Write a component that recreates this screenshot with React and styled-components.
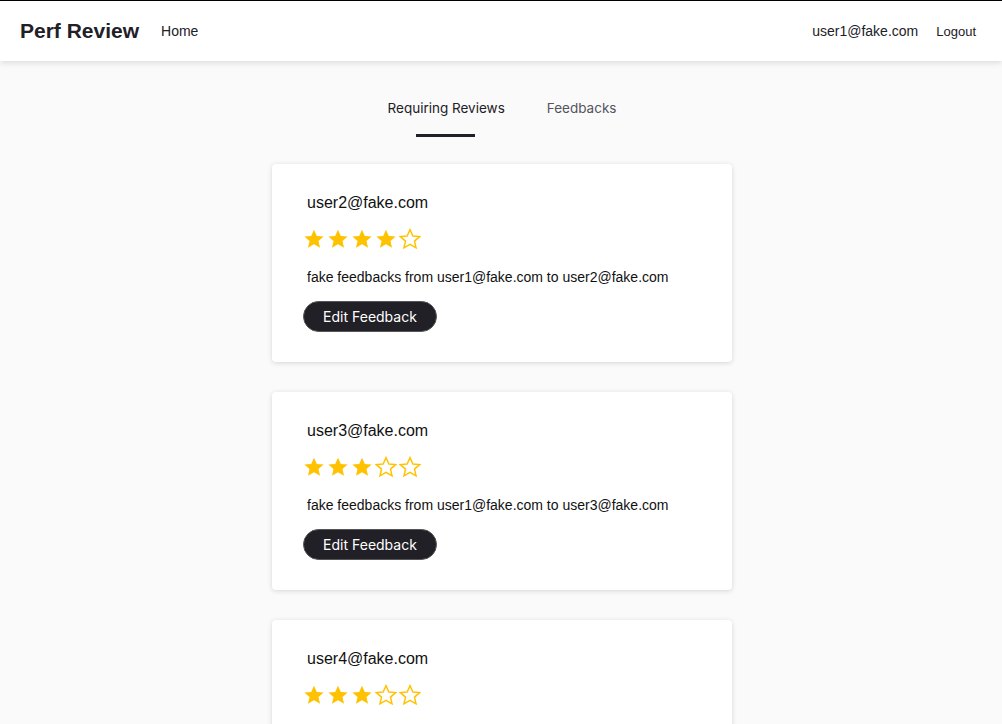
import React from 'react';
import styled, { createGlobalStyle } from 'styled-components';

const reviews = [
    { email: 'user2@fake.com', rating: 4 },
    { email: 'user3@fake.com', rating: 3 },
    { email: 'user4@fake.com', rating: 3 },
];

export default function App() {
    return (
        <Page>
            <GlobalStyle />
            <Header>
                <Left>
                    <Logo>Perf Review</Logo>
                    <NavLink>Home</NavLink>
                </Left>
                <Right>
                    <UserEmail>user1@fake.com</UserEmail>
                    <Logout>Logout</Logout>
                </Right>
            </Header>

            <Tabs>
                <Tab active>Requiring Reviews</Tab>
                <Tab>Feedbacks</Tab>
            </Tabs>

            <List>
                {reviews.map((r) => (
                    <Card key={r.email}>
                        <Email>{r.email}</Email>
                        <Stars>
                            {[0, 1, 2, 3, 4].map((i) => (
                                <Star key={i} filled={i < r.rating} />
                            ))}
                        </Stars>
                        <Text>fake feedbacks from user1@fake.com to {r.email}</Text>
                        <Button>Edit Feedback</Button>
                    </Card>
                ))}
            </List>
        </Page>
    );
}

function Star({ filled }) {
    return (
        <StarSvg viewBox="0 0 24 24">
            <path
                d="M12 1.8l3.1 6.9 7.4.7-5.6 4.9 1.7 7.3L12 17.8l-6.6 3.8 1.7-7.3-5.6-4.9 7.4-.7z"
                fill={filled ? '#ffc200' : 'none'}
                stroke="#ffc200"
                strokeWidth={filled ? 0 : 1.6}
                strokeLinejoin="miter"
            />
        </StarSvg>
    );
}

const GlobalStyle = createGlobalStyle`
    body {
        margin: 0;
        background: #fafafa;
        font-family: "Liberation Sans", Arial, sans-serif;
    }
`;

const Page = styled.div`
    min-height: 724px;
    border-top: 1px solid #000;
`;

const Header = styled.header`
    height: 60px;
    background: #fff;
    display: flex;
    align-items: center;
    justify-content: space-between;
    padding: 0 26px 0 20px;
    box-shadow: 0 2px 6px rgba(0, 0, 0, 0.12);
`;

const Left = styled.div`
    display: flex;
    align-items: center;
    gap: 22px;
`;

const Logo = styled.span`
    font-size: 21px;
    font-weight: bold;
    color: #222027;
`;

const NavLink = styled.span`
    font-size: 14px;
    color: #222027;
`;

const Right = styled.div`
    display: flex;
    align-items: center;
    gap: 18px;
`;

const UserEmail = styled.span`
    font-size: 14px;
    color: #222027;
`;

const Logout = styled.span`
    font-size: 13px;
    color: #222027;
`;

const Tabs = styled.div`
    display: flex;
    justify-content: center;
    gap: 42px;
    padding-top: 39px;
    margin-left: 2px;
`;

const Tab = styled.div`
    position: relative;
    font-family: Inter, "Noto Sans", sans-serif;
    font-size: 13.5px;
    color: ${(p) => (p.active ? '#222027' : '#555360')};
    padding-bottom: 21px;
    &::after {
        content: '';
        display: ${(p) => (p.active ? 'block' : 'none')};
        position: absolute;
        left: 50%;
        bottom: 0;
        width: 59px;
        height: 3px;
        margin-left: -30px;
        background: #222027;
    }
`;

const List = styled.div`
    display: flex;
    flex-direction: column;
    align-items: center;
    gap: 30px;
    padding-top: 27px;
    margin-left: 2px;
`;

const Card = styled.div`
    width: 460px;
    box-sizing: border-box;
    background: #fff;
    border-radius: 4px;
    box-shadow: 0 1px 5px rgba(0, 0, 0, 0.15);
    padding: 30px 35px 30px 31px;
`;

const Email = styled.div`
    font-size: 16px;
    color: #111;
    padding-left: 4px;
`;

const Stars = styled.div`
    display: flex;
    gap: 2px;
    margin-top: 16px;
`;

const StarSvg = styled.svg`
    width: 22px;
    height: 22px;
`;

const Text = styled.div`
    font-size: 14px;
    color: #111;
    margin-top: 19px;
    padding-left: 4px;
`;

const Button = styled.button`
    display: block;
    margin-top: 16px;
    height: 31px;
    width: 134px;
    border: 1px solid #555;
    border-radius: 16px;
    background: #222027;
    color: #fff;
    font-family: Inter, "Noto Sans", sans-serif;
    font-size: 14px;
    cursor: pointer;
`;
